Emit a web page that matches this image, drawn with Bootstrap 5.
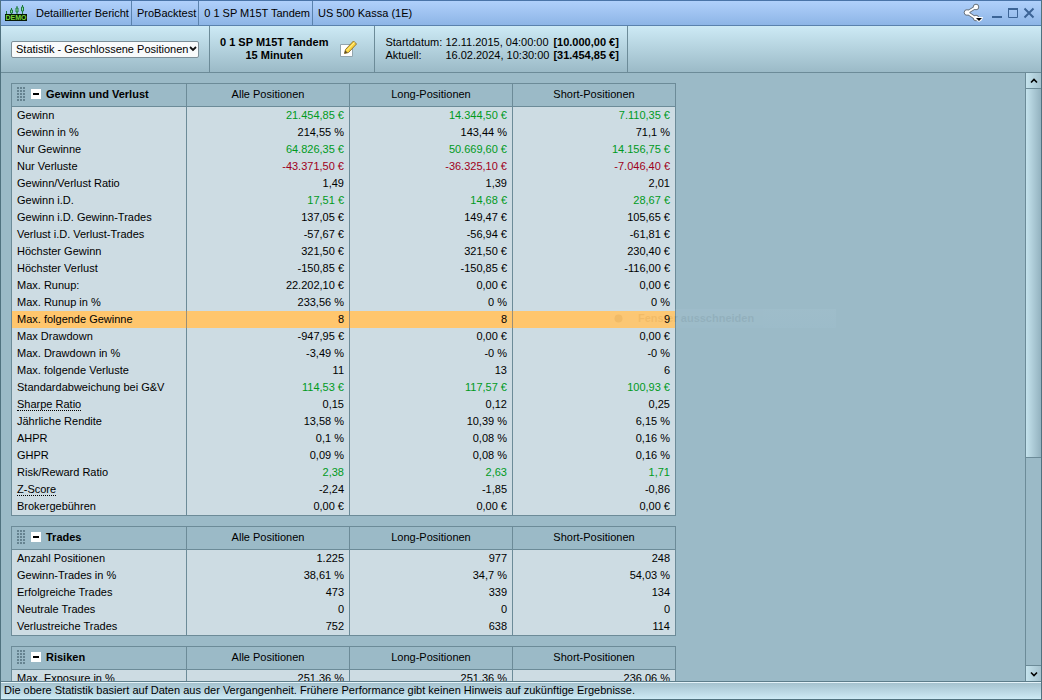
<!DOCTYPE html>
<html lang="de">
<head>
<meta charset="utf-8">
<meta name="viewport" content="width=device-width, initial-scale=1">
<title>Detaillierter Bericht</title>
<link href="https://cdn.jsdelivr.net/npm/bootstrap@5.3.0/dist/css/bootstrap.min.css" rel="stylesheet">
<style>
  :root { --line: #6c8b98; --pane: #9bbac7; --cell: #cddce3; }
  body { font: 11px/13px "Liberation Sans", Arial, sans-serif; color: #000; background: var(--pane); }
  .app-window { border: 1px solid #50727f; border-top-color: #4a74a8; }
  .title-bar { height: 25px; background: linear-gradient(#b0d0fb, #8db5e6); border-bottom: 1px solid #5a82ad; }
  .title-seg { padding: 0 2px 0 5px; border-right: 1px solid #5a82ad; }
  .title-seg:last-of-type { border-right: 0; }
  .win-btn { width: 16px; height: 24px; color: #3c6496; }
  .tool-bar { height: 47px; background: linear-gradient(#cdeaf5, #9bbac7); border-bottom: 1px solid var(--line); }
  .tool-seg { padding: 0 10px; border-right: 1px solid var(--line); }
  .tool-seg:last-child { padding-right: 8px; }
  .stat-select { width: 188px; height: 17px; padding: 0 9px 0 4px; font: inherit; color: #000; border: 1px solid #7d8f98; border-radius: 2px; appearance: none;
    background: #f8fafb url("data:image/svg+xml,%3Csvg xmlns='http://www.w3.org/2000/svg' viewBox='0 0 8 6'%3E%3Cpath d='M1 1l3 3 3-3' fill='none' stroke='%23111' stroke-width='1.8'/%3E%3C/svg%3E") no-repeat right 1px center / 8px 6px; }
  .edit-btn { margin: 0 6px 0 12px; }
  .date-grid { display: grid; grid-template-columns: 60px auto auto; }
  .date-grid b { padding-left: 4px; }
  .report-pane { min-height: 0; padding: 10px 10px 0; }
  .stat-table { width: 665px; max-width: 100%; table-layout: fixed; border-collapse: separate; border-spacing: 0; border: 1px solid var(--line); background: var(--cell); margin-bottom: 10px; }
  .stat-table th, .stat-table td { padding: 0 5px; border-left: 1px solid var(--line); text-align: right; height: 17px; line-height: 17px; white-space: nowrap; font-weight: 400; }
  .stat-table th:first-child { border-left: 0; text-align: left; width: 174px; }
  .stat-table thead th { height: 23px; line-height: 20px; padding-bottom: 2px; text-align: center; background: var(--pane); border-bottom: 1px solid var(--line); }
  .stat-table thead th:first-child { font-weight: 700; }
  .head-tools { gap: 5px; }
  .grip { width: 9px; height: 14px; background: radial-gradient(circle at 1px 1px, #668390 1px, transparent 1px) 0 0 / 3px 3px; }
  .fold-btn { width: 10px; height: 10px; background: #fff; }
  .fold-btn::before { content: ""; width: 6px; height: 2px; background: #000; }
  .pos { color: #009a1c; }
  .neg { color: #a00020; }
  .marked { background: #ffc66d; }
  .stat-table .marked td { border-color: #9a8f78; }
  .stat-table abbr { text-decoration: none; border-bottom: 1px dotted #000; display: inline-block; line-height: 11px; cursor: help; }
  .fading-menu { left: 609px; top: 236px; width: 226px; height: 19px; padding-left: 4px; gap: 15px; opacity: .05; background: linear-gradient(#dff0ff, #b9dcf5); }
  .scroll-rail { width: 16px; border-left: 1px solid var(--line); }
  .scroll-btn { height: 16px; background: linear-gradient(90deg, #c5e3ed, #a5c2ce); border: 0; border-bottom: 1px solid var(--line); }
  .scroll-btn.down { border-top: 1px solid var(--line); border-bottom: 0; }
  .scroll-thumb { height: 64%; background: linear-gradient(90deg, #c5e3ed, #93b2bf); border-bottom: 1px solid var(--line); }
  .status-line { height: 18px; padding-left: 3px; line-height: 17px; border-top: 1px solid #5d7d8a; background: linear-gradient(#e4f3f9 1px, #a5c2ce 1px, #cdeaf5); }
</style>
</head>
<body>
<div class="app-window vh-100 d-flex flex-column overflow-hidden">
  <header class="title-bar d-flex align-items-center flex-shrink-0">
    <svg class="ms-1 me-1" width="22" height="20" viewBox="0 0 22 20" role="img" aria-label="Demo">
      <path d="M1.500 8v3M6.500 5v6M12 3v8M17.500 2v9" stroke="#1c7a3c" stroke-width="1"/>
      <path d="M5.500 7h2v3h-2zM11 5h2v4h-2zM16.500 4h2v4h-2z" fill="#8edaa6" stroke="#1c7a3c"/>
      <rect x="0" y="11" width="22" height="7" fill="#061806"/>
      <text x="11" y="17" text-anchor="middle" font-size="7" font-weight="700" font-family="Liberation Sans, sans-serif" fill="#7ad83c">DEMO</text>
    </svg>
    <div class="title-seg h-100 d-flex align-items-center">Detaillierter Bericht</div>
    <div class="title-seg h-100 d-flex align-items-center">ProBacktest</div>
    <div class="title-seg h-100 d-flex align-items-center">0 1 SP M15T Tandem</div>
    <div class="title-seg h-100 d-flex align-items-center">US 500 Kassa (1E)</div>
    <nav class="ms-auto d-flex align-items-center pe-1" aria-label="Fenster">
      <button class="btn p-0 border-0 d-flex me-1" aria-label="Teilen">
        <svg width="22" height="20" viewBox="0 0 22 20"><path d="M13 4L4 9.500l9 6" fill="none" stroke="#66717d" stroke-width="3.500"/><g fill="#fff" stroke="#66717d"><circle cx="13" cy="4" r="2.800"/><circle cx="4" cy="9.500" r="2.800"/><circle cx="13" cy="15" r="2.800"/></g><path d="M13 4L4 9.500l9 6" fill="none" stroke="#fff" stroke-width="1.800"/><path d="M12 14h8l-1 3-3 2-3-2z" fill="#fff"/><path d="M13 15h6l-3 3z"/></svg>
      </button>
      <button class="btn win-btn rounded-0 p-0 border-0 d-flex align-items-center justify-content-center" aria-label="Minimieren"><svg width="12" height="12" viewBox="0 0 12 12"><path d="M1 10h10" stroke="currentColor" stroke-width="2"/></svg></button>
      <button class="btn win-btn rounded-0 p-0 border-0 d-flex align-items-center justify-content-center" aria-label="Maximieren"><svg width="12" height="12" viewBox="0 0 12 12"><path d="M1.500 2v8.500h9V2" fill="none" stroke="currentColor"/><path d="M1 2h10" stroke="currentColor" stroke-width="2"/></svg></button>
      <button class="btn win-btn rounded-0 p-0 border-0 d-flex align-items-center justify-content-center" aria-label="Schließen"><svg width="12" height="12" viewBox="0 0 12 12"><path d="M1.500 1.500l9 9M10.500 1.500l-9 9" stroke="currentColor" stroke-width="2"/></svg></button>
    </nav>
  </header>

  <div class="tool-bar d-flex flex-shrink-0">
    <div class="tool-seg d-flex align-items-center"><select class="stat-select" aria-label="Statistik"><option>Statistik - Geschlossene Positionen</option></select></div>
    <div class="tool-seg d-flex align-items-center text-center fw-bold">
      <div>0 1 SP M15T Tandem<br>15 Minuten</div>
      <button class="btn edit-btn p-0 border-0 d-flex" aria-label="Bearbeiten">
        <svg width="18" height="18" viewBox="0 0 18 18"><path d="M.5 4.500h12v12H.5z" fill="#fff" stroke="#93a5ae"/><path d="M4.500 13.500l1-4 8-8.500 3 3-8 8.500z" fill="#fbd43c" stroke="#8f7431"/><path d="M7 10.500l7.500-8" stroke="#fff0a0"/><path d="M4.500 13.500l.8-3 2.200 2z" fill="#5b4a2a"/></svg>
      </button>
    </div>
    <div class="tool-seg d-flex align-items-center">
      <div class="date-grid"><span>Startdatum:</span><span>12.11.2015, 04:00:00</span><b>[10.000,00 €]</b><span>Aktuell:</span><span>16.02.2024, 10:30:00</span><b>[31.454,85 €]</b></div>
    </div>
  </div>

  <div class="d-flex flex-grow-1 overflow-hidden">
    <main class="report-pane flex-grow-1 overflow-hidden position-relative">
      <table class="stat-table">
        <thead><tr><th scope="col"><div class="head-tools d-flex align-items-center"><span class="grip"></span><button class="fold-btn border-0 p-0 d-flex align-items-center justify-content-center" aria-label="Einklappen"></button><span>Gewinn und Verlust</span></div></th><th scope="col">Alle Positionen</th><th scope="col">Long-Positionen</th><th scope="col">Short-Positionen</th></tr></thead>
        <tbody>
          <tr><th scope="row">Gewinn</th><td class="pos">21.454,85 €</td><td class="pos">14.344,50 €</td><td class="pos">7.110,35 €</td></tr>
          <tr><th scope="row">Gewinn in %</th><td>214,55 %</td><td>143,44 %</td><td>71,1 %</td></tr>
          <tr><th scope="row">Nur Gewinne</th><td class="pos">64.826,35 €</td><td class="pos">50.669,60 €</td><td class="pos">14.156,75 €</td></tr>
          <tr><th scope="row">Nur Verluste</th><td class="neg">-43.371,50 €</td><td class="neg">-36.325,10 €</td><td class="neg">-7.046,40 €</td></tr>
          <tr><th scope="row">Gewinn/Verlust Ratio</th><td>1,49</td><td>1,39</td><td>2,01</td></tr>
          <tr><th scope="row">Gewinn i.D.</th><td class="pos">17,51 €</td><td class="pos">14,68 €</td><td class="pos">28,67 €</td></tr>
          <tr><th scope="row">Gewinn i.D. Gewinn-Trades</th><td>137,05 €</td><td>149,47 €</td><td>105,65 €</td></tr>
          <tr><th scope="row">Verlust i.D. Verlust-Trades</th><td>-57,67 €</td><td>-56,94 €</td><td>-61,81 €</td></tr>
          <tr><th scope="row">Höchster Gewinn</th><td>321,50 €</td><td>321,50 €</td><td>230,40 €</td></tr>
          <tr><th scope="row">Höchster Verlust</th><td>-150,85 €</td><td>-150,85 €</td><td>-116,00 €</td></tr>
          <tr><th scope="row">Max. Runup:</th><td>22.202,10 €</td><td>0,00 €</td><td>0,00 €</td></tr>
          <tr><th scope="row">Max. Runup in %</th><td>233,56 %</td><td>0 %</td><td>0 %</td></tr>
          <tr class="marked"><th scope="row">Max. folgende Gewinne</th><td>8</td><td>8</td><td>9</td></tr>
          <tr><th scope="row">Max Drawdown</th><td>-947,95 €</td><td>0,00 €</td><td>0,00 €</td></tr>
          <tr><th scope="row">Max. Drawdown in %</th><td>-3,49 %</td><td>-0 %</td><td>-0 %</td></tr>
          <tr><th scope="row">Max. folgende Verluste</th><td>11</td><td>13</td><td>6</td></tr>
          <tr><th scope="row">Standardabweichung bei G&amp;V</th><td class="pos">114,53 €</td><td class="pos">117,57 €</td><td class="pos">100,93 €</td></tr>
          <tr><th scope="row"><abbr>Sharpe Ratio</abbr></th><td>0,15</td><td>0,12</td><td>0,25</td></tr>
          <tr><th scope="row">Jährliche Rendite</th><td>13,58 %</td><td>10,39 %</td><td>6,15 %</td></tr>
          <tr><th scope="row">AHPR</th><td>0,1 %</td><td>0,08 %</td><td>0,16 %</td></tr>
          <tr><th scope="row">GHPR</th><td>0,09 %</td><td>0,08 %</td><td>0,16 %</td></tr>
          <tr><th scope="row">Risk/Reward Ratio</th><td class="pos">2,38</td><td class="pos">2,63</td><td class="pos">1,71</td></tr>
          <tr><th scope="row"><abbr>Z-Score</abbr></th><td>-2,24</td><td>-1,85</td><td>-0,86</td></tr>
          <tr><th scope="row">Brokergebühren</th><td>0,00 €</td><td>0,00 €</td><td>0,00 €</td></tr>
        </tbody>
      </table>
      <table class="stat-table">
        <thead><tr><th scope="col"><div class="head-tools d-flex align-items-center"><span class="grip"></span><button class="fold-btn border-0 p-0 d-flex align-items-center justify-content-center" aria-label="Einklappen"></button><span>Trades</span></div></th><th scope="col">Alle Positionen</th><th scope="col">Long-Positionen</th><th scope="col">Short-Positionen</th></tr></thead>
        <tbody>
          <tr><th scope="row">Anzahl Positionen</th><td>1.225</td><td>977</td><td>248</td></tr>
          <tr><th scope="row">Gewinn-Trades in %</th><td>38,61 %</td><td>34,7 %</td><td>54,03 %</td></tr>
          <tr><th scope="row">Erfolgreiche Trades</th><td>473</td><td>339</td><td>134</td></tr>
          <tr><th scope="row">Neutrale Trades</th><td>0</td><td>0</td><td>0</td></tr>
          <tr><th scope="row">Verlustreiche Trades</th><td>752</td><td>638</td><td>114</td></tr>
        </tbody>
      </table>
      <table class="stat-table">
        <thead><tr><th scope="col"><div class="head-tools d-flex align-items-center"><span class="grip"></span><button class="fold-btn border-0 p-0 d-flex align-items-center justify-content-center" aria-label="Einklappen"></button><span>Risiken</span></div></th><th scope="col">Alle Positionen</th><th scope="col">Long-Positionen</th><th scope="col">Short-Positionen</th></tr></thead>
        <tbody>
          <tr><th scope="row">Max. Exposure in %</th><td>251,36 %</td><td>251,36 %</td><td>236,06 %</td></tr>
        </tbody>
      </table>
      <div class="fading-menu position-absolute d-flex align-items-center fw-bold"><svg width="9" height="9" viewBox="0 0 9 9"><circle cx="4.500" cy="4.500" r="4"/></svg>Fenster ausschneiden</div>
    </main>
    <div class="scroll-rail d-flex flex-column flex-shrink-0">
      <button class="scroll-btn p-0 d-flex align-items-center justify-content-center flex-shrink-0" aria-label="Nach oben"><svg width="8" height="6" viewBox="0 0 8 6"><path d="M1 4.500l3-3 3 3" fill="none" stroke="#000" stroke-width="1.600"/></svg></button>
      <div class="flex-grow-1"><div class="scroll-thumb"></div></div>
      <button class="scroll-btn down p-0 d-flex align-items-center justify-content-center flex-shrink-0" aria-label="Nach unten"><svg width="8" height="6" viewBox="0 0 8 6"><path d="M1 1.500l3 3 3-3" fill="none" stroke="#000" stroke-width="1.600"/></svg></button>
    </div>
  </div>
  <footer class="status-line flex-shrink-0">Die obere Statistik basiert auf Daten aus der Vergangenheit. Frühere Performance gibt keinen Hinweis auf zukünftige Ergebnisse.</footer>
</div>
<script src="https://cdn.jsdelivr.net/npm/bootstrap@5.3.0/dist/js/bootstrap.bundle.min.js"></script>
</body>
</html>
